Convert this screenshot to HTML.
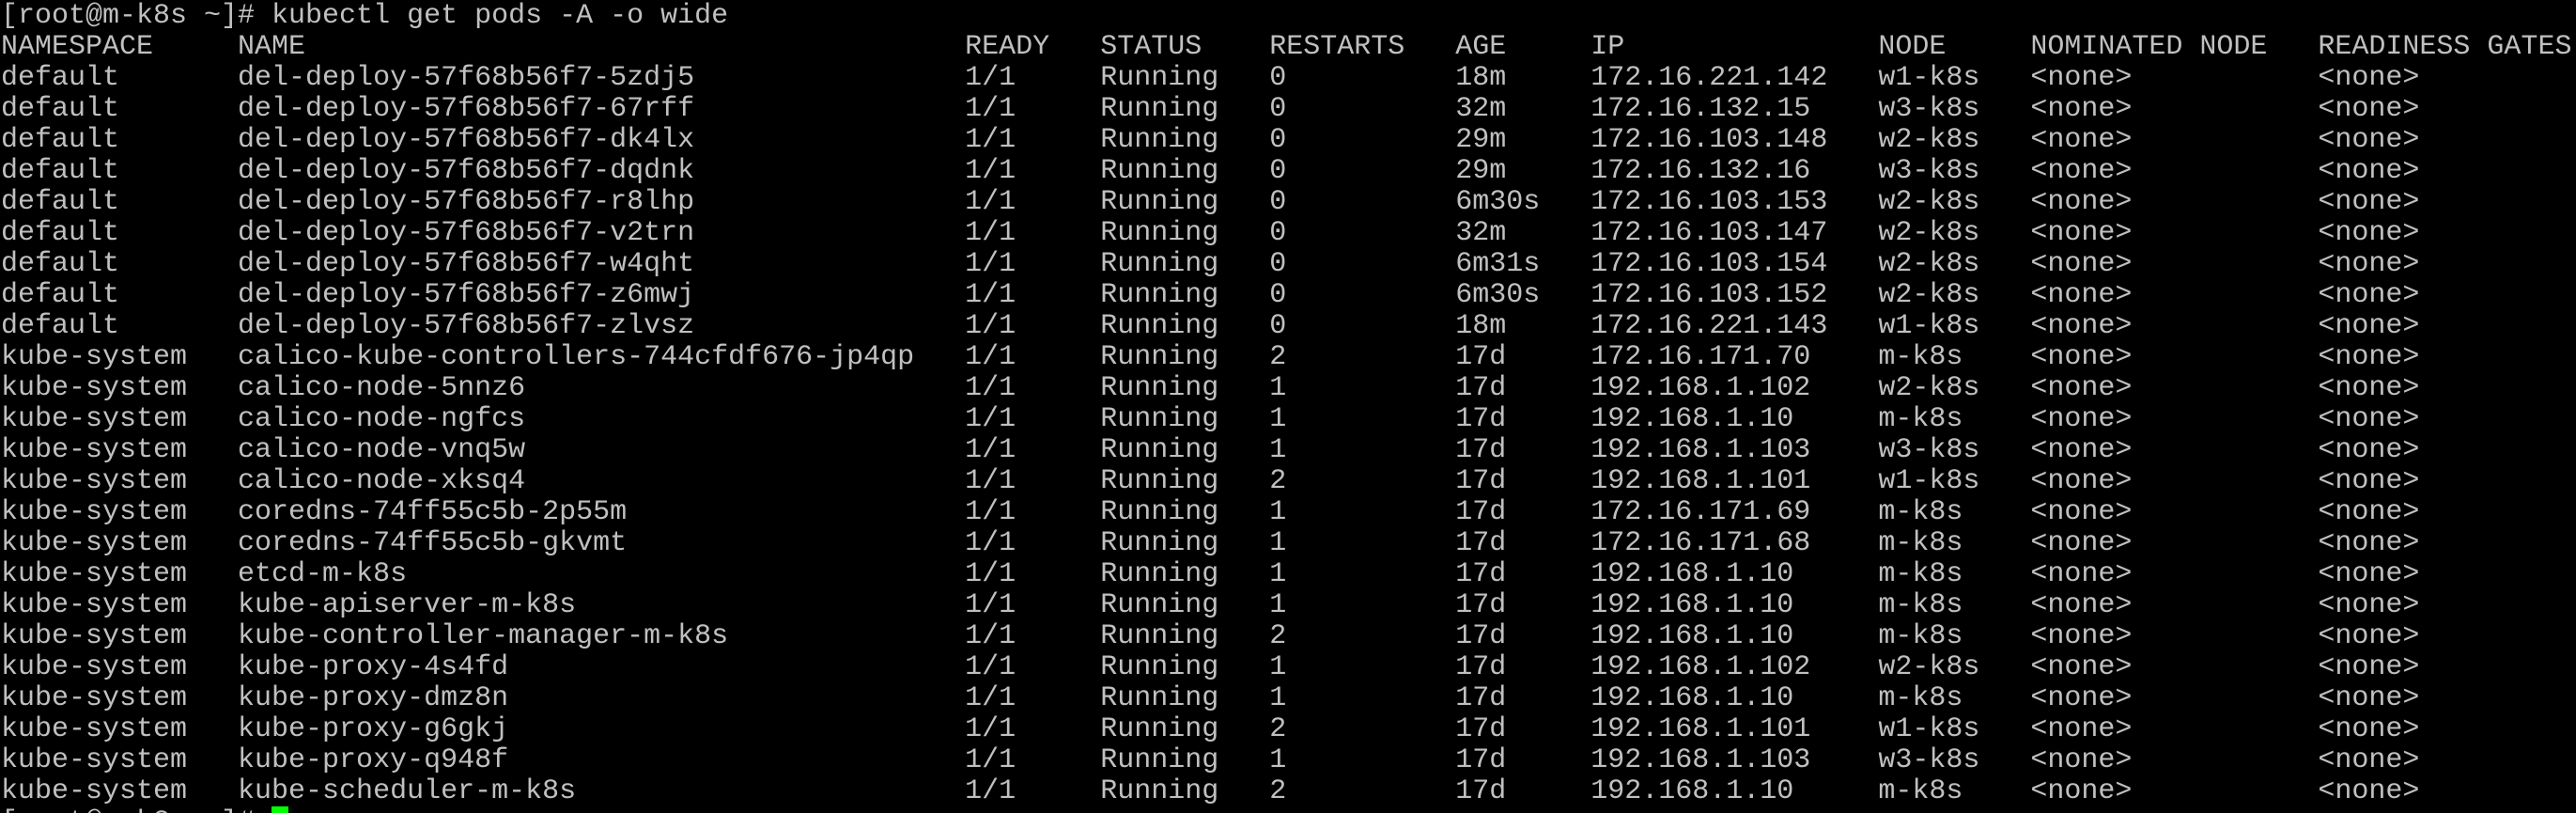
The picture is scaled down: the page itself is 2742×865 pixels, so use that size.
<!DOCTYPE html>
<html><head><meta charset="utf-8"><style>
html,body{margin:0;padding:0;background:#000;width:2742px;height:865px;overflow:hidden}
pre{margin:0;padding:0 0 0 1px;font-family:"Liberation Mono",monospace;font-size:30px;line-height:33px;color:#c0c0c0;white-space:pre;position:relative;top:1px}
.c{display:inline-block;width:18px;height:32px;background:#00ff00;vertical-align:top;margin-top:-1px}
</style></head><body><pre>[root@m-k8s ~]# kubectl get pods -A -o wide
NAMESPACE     NAME                                       READY   STATUS    RESTARTS   AGE     IP               NODE     NOMINATED NODE   READINESS GATES
default       del-deploy-57f68b56f7-5zdj5                1/1     Running   0          18m     172.16.221.142   w1-k8s   &lt;none&gt;           &lt;none&gt;
default       del-deploy-57f68b56f7-67rff                1/1     Running   0          32m     172.16.132.15    w3-k8s   &lt;none&gt;           &lt;none&gt;
default       del-deploy-57f68b56f7-dk4lx                1/1     Running   0          29m     172.16.103.148   w2-k8s   &lt;none&gt;           &lt;none&gt;
default       del-deploy-57f68b56f7-dqdnk                1/1     Running   0          29m     172.16.132.16    w3-k8s   &lt;none&gt;           &lt;none&gt;
default       del-deploy-57f68b56f7-r8lhp                1/1     Running   0          6m30s   172.16.103.153   w2-k8s   &lt;none&gt;           &lt;none&gt;
default       del-deploy-57f68b56f7-v2trn                1/1     Running   0          32m     172.16.103.147   w2-k8s   &lt;none&gt;           &lt;none&gt;
default       del-deploy-57f68b56f7-w4qht                1/1     Running   0          6m31s   172.16.103.154   w2-k8s   &lt;none&gt;           &lt;none&gt;
default       del-deploy-57f68b56f7-z6mwj                1/1     Running   0          6m30s   172.16.103.152   w2-k8s   &lt;none&gt;           &lt;none&gt;
default       del-deploy-57f68b56f7-zlvsz                1/1     Running   0          18m     172.16.221.143   w1-k8s   &lt;none&gt;           &lt;none&gt;
kube-system   calico-kube-controllers-744cfdf676-jp4qp   1/1     Running   2          17d     172.16.171.70    m-k8s    &lt;none&gt;           &lt;none&gt;
kube-system   calico-node-5nnz6                          1/1     Running   1          17d     192.168.1.102    w2-k8s   &lt;none&gt;           &lt;none&gt;
kube-system   calico-node-ngfcs                          1/1     Running   1          17d     192.168.1.10     m-k8s    &lt;none&gt;           &lt;none&gt;
kube-system   calico-node-vnq5w                          1/1     Running   1          17d     192.168.1.103    w3-k8s   &lt;none&gt;           &lt;none&gt;
kube-system   calico-node-xksq4                          1/1     Running   2          17d     192.168.1.101    w1-k8s   &lt;none&gt;           &lt;none&gt;
kube-system   coredns-74ff55c5b-2p55m                    1/1     Running   1          17d     172.16.171.69    m-k8s    &lt;none&gt;           &lt;none&gt;
kube-system   coredns-74ff55c5b-gkvmt                    1/1     Running   1          17d     172.16.171.68    m-k8s    &lt;none&gt;           &lt;none&gt;
kube-system   etcd-m-k8s                                 1/1     Running   1          17d     192.168.1.10     m-k8s    &lt;none&gt;           &lt;none&gt;
kube-system   kube-apiserver-m-k8s                       1/1     Running   1          17d     192.168.1.10     m-k8s    &lt;none&gt;           &lt;none&gt;
kube-system   kube-controller-manager-m-k8s              1/1     Running   2          17d     192.168.1.10     m-k8s    &lt;none&gt;           &lt;none&gt;
kube-system   kube-proxy-4s4fd                           1/1     Running   1          17d     192.168.1.102    w2-k8s   &lt;none&gt;           &lt;none&gt;
kube-system   kube-proxy-dmz8n                           1/1     Running   1          17d     192.168.1.10     m-k8s    &lt;none&gt;           &lt;none&gt;
kube-system   kube-proxy-g6gkj                           1/1     Running   2          17d     192.168.1.101    w1-k8s   &lt;none&gt;           &lt;none&gt;
kube-system   kube-proxy-q948f                           1/1     Running   1          17d     192.168.1.103    w3-k8s   &lt;none&gt;           &lt;none&gt;
kube-system   kube-scheduler-m-k8s                       1/1     Running   2          17d     192.168.1.10     m-k8s    &lt;none&gt;           &lt;none&gt;
[root@m-k8s ~]# <span class="c"></span></pre></body></html>
